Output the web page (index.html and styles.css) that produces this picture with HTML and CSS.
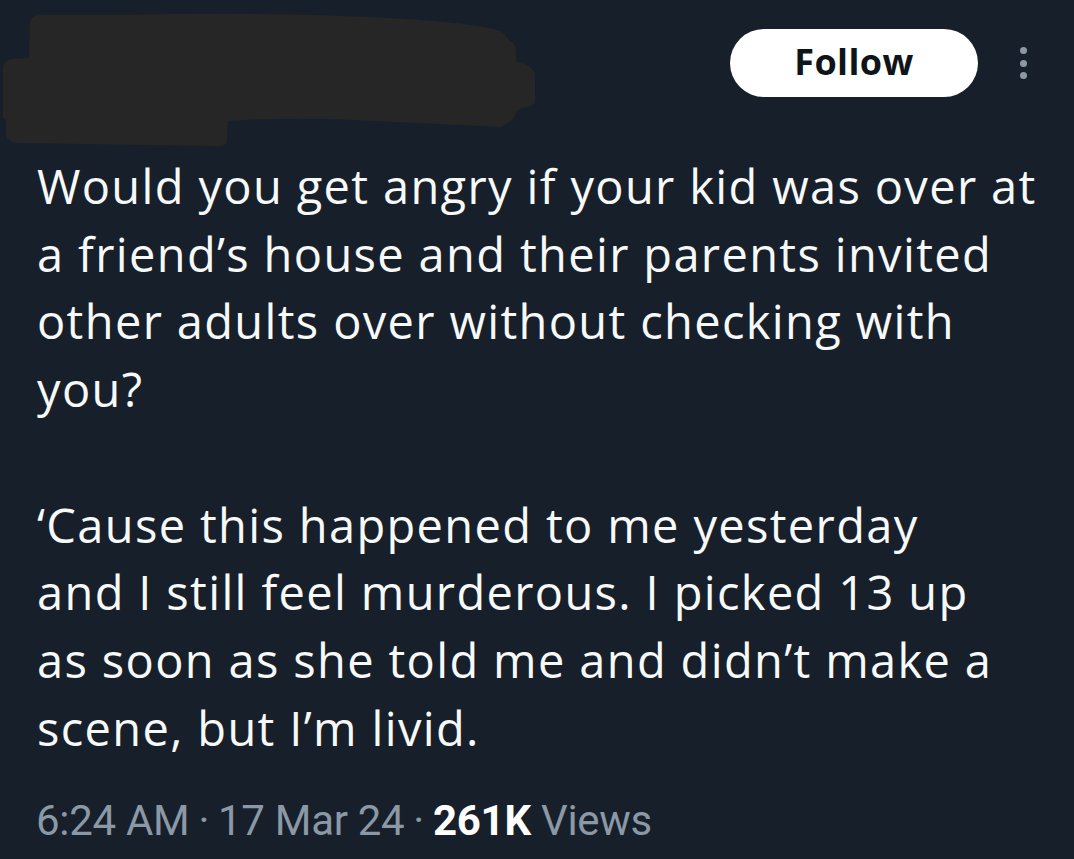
FILE: index.html
```html
<!DOCTYPE html>
<html lang="en">
<head>
<meta charset="utf-8">
<title>Tweet</title>
<link rel="stylesheet" href="styles.css">
</head>
<body>
<article class="tweet">
  <header class="tweet-header">
    <svg class="redact" width="540" height="150" viewBox="0 0 540 150" aria-hidden="true">
      <path d="M 30 24 Q 30 15 42 15 L 120 15 Q 300 11 420 20 Q 497 26 503 33 L 510 41 Q 516 43 516 52 L 516 62 Q 535 65 535 76 L 535 101 Q 535 107 522 108 L 516 112 Q 512 124 500 127 Q 420 123 330 119 Q 270 118 228 121 L 227 141 Q 227 146 218 146 L 16 143 Q 7 142 6 134 L 6 120 L 3 117 L 3 68 Q 3 60 12 59 L 29 58 Z" fill="#262626"/>
    </svg>
    <button class="follow-btn" type="button">Follow</button>
    <div class="more" aria-label="More">
      <span class="dot"></span><span class="dot"></span><span class="dot"></span>
    </div>
  </header>
  <div class="tweet-text">
    <p>Would you get angry if your kid was over at<br>a friend’s house and their parents invited<br>other adults over without checking with<br>you?</p>
    <p>‘Cause this happened to me yesterday<br>and I still feel murderous. I picked 13 up<br>as soon as she told me and didn’t make a<br>scene, but I’m livid.</p>
  </div>
  <div class="meta">
    <span>6:24 AM</span><span class="sep">·</span><span>17 Mar 24</span><span class="sep">·</span><strong class="views-count">261K</strong> <span>Views</span>
  </div>
</article>
</body>
</html>
```
FILE: styles.css
```css
html, body {
  margin: 0;
  padding: 0;
  background: #17202a;
}
body {
  width: 1074px;
  height: 859px;
  overflow: hidden;
  font-family: "Open Sans", "Noto Sans", "DejaVu Sans", sans-serif;
  color: #f7f9f9;
}
.tweet {
  display: flex;
  flex-direction: column;
}
.tweet-header {
  display: flex;
  align-items: flex-start;
  height: 153px;
}
.redact {
  flex: none;
  display: block;
}
.follow-btn {
  margin: 29px 0 0 auto;
  width: 248px;
  height: 68px;
  border: none;
  border-radius: 34px;
  background: #ffffff;
  color: #0f1419;
  font-family: "Open Sans", "Noto Sans", sans-serif;
  font-weight: 700;
  font-size: 36px;
  letter-spacing: 0.4px;
  padding: 0 0 2px 0;
  line-height: 66px;
}
.more {
  display: flex;
  flex-direction: column;
  gap: 5.5px;
  margin: 47px 47px 0 42px;
}
.dot {
  width: 7px;
  height: 7px;
  border-radius: 50%;
  background: #8b98a5;
}
.tweet-text {
  padding: 0 0 0 37px;
  font-size: 47px;
  line-height: 67.7px;
  letter-spacing: 1.35px;
  white-space: nowrap;
}
.tweet-text p {
  margin: 0 0 67.7px 0;
}
.tweet-text p:last-child {
  margin-bottom: 0;
}
.meta {
  padding: 0 36px;
  margin-top: 31px;
  font-family: Roboto, "Liberation Sans", sans-serif;
  font-size: 42px;
  color: #8b98a5;
  line-height: 56px;
  letter-spacing: -0.3px;
}
.sep {
  margin: 0 9px;
}
.views-count {
  color: #ffffff;
  font-weight: 700;
}
```
